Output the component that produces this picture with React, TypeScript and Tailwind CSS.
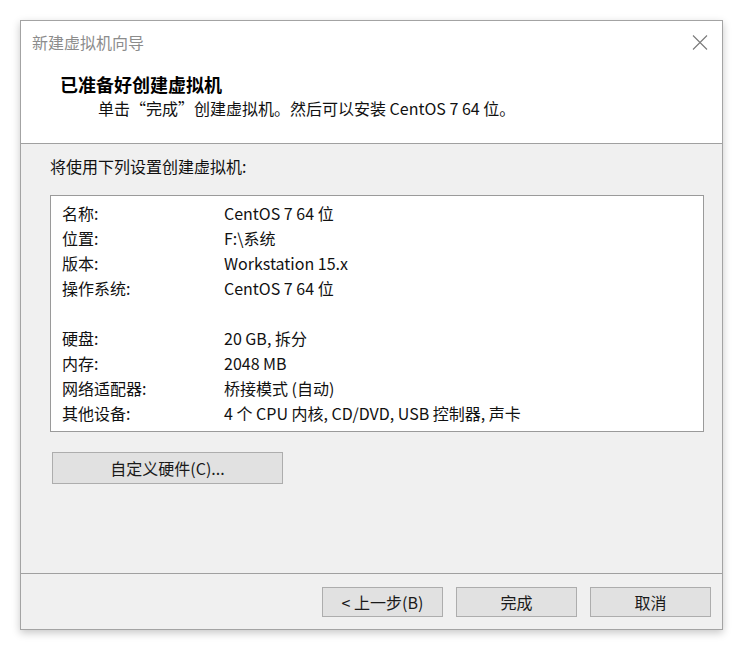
import React from 'react'

const rows: [string, string][] = [
  ['名称:', 'CentOS 7 64 位'],
  ['位置:', 'F:\\系统'],
  ['版本:', 'Workstation 15.x'],
  ['操作系统:', 'CentOS 7 64 位'],
  ['', ''],
  ['硬盘:', '20 GB, 拆分'],
  ['内存:', '2048 MB'],
  ['网络适配器:', '桥接模式 (自动)'],
  ['其他设备:', '4 个 CPU 内核, CD/DVD, USB 控制器, 声卡'],
]

const font = { fontFamily: '"Noto Sans CJK SC", "Noto Sans", sans-serif' }

function WinButton({ children, className = '' }: { children: React.ReactNode; className?: string }) {
  return (
    <button
      className={`flex items-center justify-center border border-[#adadad] bg-[#e1e1e1] text-[16px] text-[#1a1a1a] ${className}`}
    >
      {children}
    </button>
  )
}

export default function App() {
  return (
    <div className="h-[656px] w-[748px] bg-white pl-[20px] pt-[20px]" style={font}>
      <div className="flex w-[703px] flex-col border border-[#a3a3a3] bg-white shadow-[0_3px_8px_rgba(0,0,0,0.22)]">
        {/* header */}
        <div className="h-[123px] border-b border-[#a0a0a0] bg-white">
          <div className="flex h-[42px] items-center justify-between pl-[11px] pr-[14px]">
            <span className="text-[16px] text-[#8c8c8c]">新建虚拟机向导</span>
            <svg width="16" height="15" viewBox="0 0 16 15">
              <path d="M1 0.5L15 14.5M15 0.5L1 14.5" stroke="#7a7a7a" strokeWidth="1.1" />
            </svg>
          </div>
          <div className="mt-[9px] pl-[39px] text-[18px] font-bold leading-[24px] text-black">
            已准备好创建虚拟机
          </div>
          <div className="pl-[77px] text-[16px] leading-[24px] text-[#111]">
            单击“完成”创建虚拟机。然后可以安装 CentOS 7 64 位。
          </div>
        </div>

        {/* body */}
        <div className="h-[430px] border-b border-[#a0a0a0] bg-[#f0f0f0] px-[29px] pt-[10px]">
          <div className="text-[16px] leading-[25px] text-[#111]">将使用下列设置创建虚拟机:</div>
          <div className="mt-[16px] h-[237px] w-[654px] border border-[#9a9a9a] bg-white pl-[11px] pt-[4px]">
            {rows.map(([k, v], i) => (
              <div key={i} className="flex h-[25px] items-center text-[16px] text-[#111]">
                <span className="w-[162px] shrink-0">{k}</span>
                <span>{v}</span>
              </div>
            ))}
          </div>
          <WinButton className="ml-[2px] mt-[20px] h-[32px] w-[231px]">自定义硬件(C)...</WinButton>
        </div>

        {/* footer */}
        <div className="flex h-[55px] justify-end gap-[13px] bg-[#f0f0f0] pr-[11px] pt-[13px]">
          <WinButton className="h-[30px] w-[121px]">&lt; 上一步(B)</WinButton>
          <WinButton className="h-[30px] w-[121px]">完成</WinButton>
          <WinButton className="h-[30px] w-[121px]">取消</WinButton>
        </div>
      </div>
    </div>
  )
}
